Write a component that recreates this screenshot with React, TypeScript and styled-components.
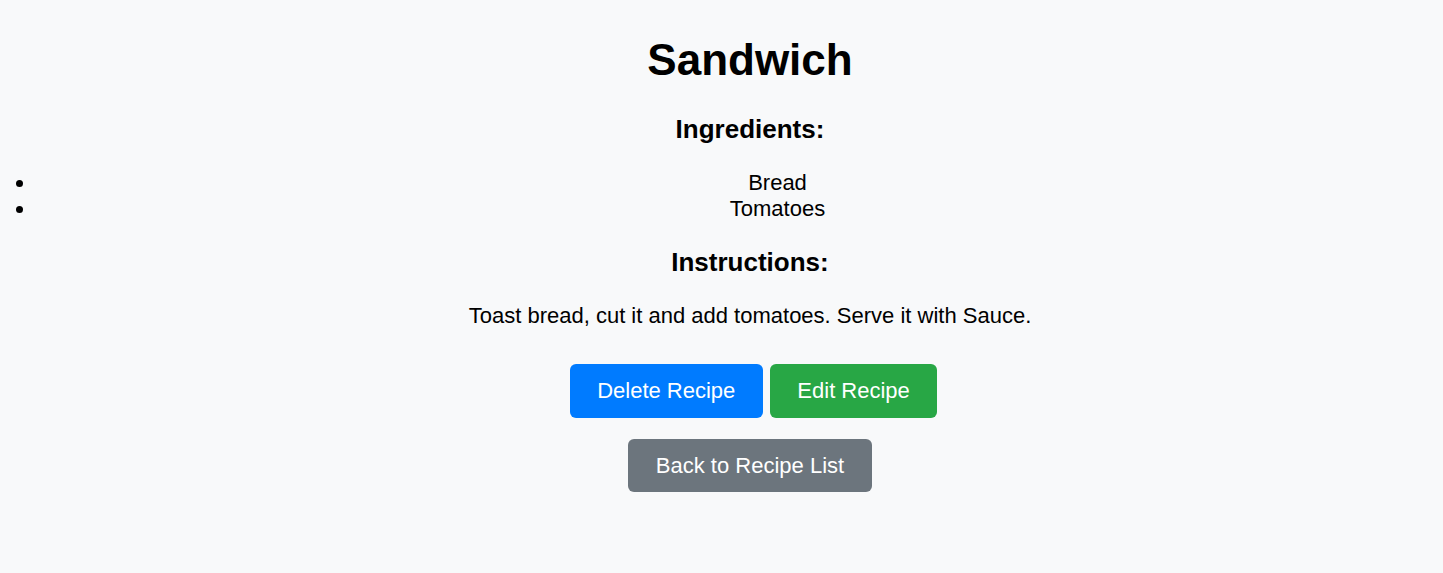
import React from 'react'
import styled, { createGlobalStyle } from 'styled-components'

const GlobalStyle = createGlobalStyle`
  html, body {
    margin: 0;
    padding: 0;
    background-color: #f8f9fa;
    overflow-x: hidden;
  }
  body {
    font-family: 'Liberation Sans', Arial, sans-serif;
    color: #000;
  }
`

const Page = styled.div`
  display: flex;
  flex-direction: column;
  align-items: center;
  text-align: center;
  padding: 35px 0 40px 57px;
`

const Title = styled.h1`
  margin: 0;
  font-size: 44px;
  font-weight: bold;
  line-height: 49px;
`

const SectionTitle = styled.h3<{ $top: number }>`
  margin: ${(p) => p.$top}px 0 0 0;
  font-size: 26px;
  font-weight: bold;
  line-height: 29px;
`

const List = styled.ul`
  align-self: stretch;
  margin: 26px 0 0 -57px;
  padding-left: 36px;
  list-style: disc outside;
`

const Item = styled.li`
  padding-left: 76px;
  font-size: 22px;
  line-height: 26px;
  text-align: center;
`

const Text = styled.p`
  margin: 26px 0 0 0;
  font-size: 22px;
  line-height: 26px;
`

const ButtonRow = styled.div<{ $top: number; $shift?: number }>`
  display: flex;
  justify-content: center;
  gap: 7px;
  padding-left: ${(p) => p.$shift ?? 0}px;
  margin-top: ${(p) => p.$top}px;
`

const Button = styled.button<{ $color: string }>`
  font-family: 'Liberation Sans', Arial, sans-serif;
  font-size: 22px;
  line-height: 26px;
  color: #fff;
  background-color: ${(p) => p.$color};
  border: none;
  border-radius: 6px;
  padding: 14px 27.5px;
  cursor: pointer;
`

const BackButton = styled(Button)`
  padding: 14px 27.5px 13px;
`

export default function App() {
  return (
    <>
      <GlobalStyle />
      <Page>
        <Title>Sandwich</Title>
        <SectionTitle $top={31}>Ingredients:</SectionTitle>
        <List>
          <Item>Bread</Item>
          <Item>Tomatoes</Item>
        </List>
        <SectionTitle $top={26}>Instructions:</SectionTitle>
        <Text>Toast bread, cut it and add tomatoes. Serve it with Sauce.</Text>
        <ButtonRow $top={35} $shift={7}>
          <Button $color="#007bff">Delete Recipe</Button>
          <Button $color="#28a745">Edit Recipe</Button>
        </ButtonRow>
        <ButtonRow $top={21}>
          <BackButton $color="#6c757d">Back to Recipe List</BackButton>
        </ButtonRow>
      </Page>
    </>
  )
}
